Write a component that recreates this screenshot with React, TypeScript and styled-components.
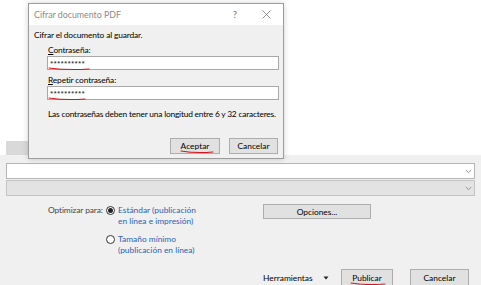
import React from "react";
import styled, { createGlobalStyle } from "styled-components";

const GlobalStyle = createGlobalStyle`
  html, body { margin: 0; padding: 0; background: #f0f0f0; }
  body { font-family: Lato, "Noto Sans", sans-serif; font-size: 8.4px; color: #000; }
  * { box-sizing: border-box; }
`;

const Page = styled.div`
  position: relative;
  width: 481px;
  height: 285px;
  overflow: hidden;
  display: flex;
  flex-direction: column;
`;

const TopArea = styled.div`
  height: 157px;
  background: #ffffff;
  padding: 141px 0 0 6px;
`;

const LeftBlock = styled.div`
  width: 40px;
  height: 14px;
  background: #d9d9d9;
`;

const Main = styled.div`
  flex: 1;
  background: #f0f0f0;
  padding: 8px 6px 0 6px;
  display: flex;
  flex-direction: column;
`;

const Combo = styled.div<{ $disabled?: boolean }>`
  height: 16px;
  margin-bottom: 1px;
  border: 1px solid ${(p) => (p.$disabled ? "#c4c4c4" : "#b5b5b5")};
  background: ${(p) => (p.$disabled ? "#e3e3e3" : "#ffffff")};
  display: flex;
  align-items: center;
  justify-content: flex-end;
  padding-right: 2px;
`;

const Chevron = () => (
  <svg width="7" height="5" viewBox="0 0 7 5">
    <path d="M0.8 1 L3.5 3.6 L6.2 1" fill="none" stroke="#8a8a8a" strokeWidth="0.9" />
  </svg>
);

const OptionsRow = styled.div`
  display: flex;
  align-items: flex-start;
  margin-top: 6px;
  padding-left: 42px;
`;

const OptLabel = styled.div`
  color: #444;
  line-height: 11px;
  padding-top: 2px;
  width: 58px;
  letter-spacing: -0.1px;
`;

const RadioGroup = styled.div`
  display: flex;
  flex-direction: column;
  gap: 5px;
  width: 157px;
`;

const RadioItem = styled.div`
  display: flex;
  align-items: flex-start;
  gap: 3px;
`;

const RadioCircle = styled.span<{ $checked?: boolean }>`
  width: 9px;
  height: 9px;
  margin-top: 3px;
  border-radius: 50%;
  border: 1px solid #333;
  background: #fff;
  display: flex;
  align-items: center;
  justify-content: center;
  flex-shrink: 0;
  &::after {
    content: "";
    width: 5px;
    height: 5px;
    border-radius: 50%;
    background: ${(p) => (p.$checked ? "#222" : "transparent")};
  }
`;

const RadioText = styled.div`
  color: #2a62b8;
  line-height: 11px;
  padding-top: 2px;
`;

const Button = styled.button<{ $w: number }>`
  width: ${(p) => p.$w}px;
  height: 16px;
  padding: 0;
  border: 1px solid #adadad;
  background: #e1e1e1;
  font-family: inherit;
  font-size: 8.4px;
  color: #000;
  display: flex;
  align-items: center;
  justify-content: center;
`;

const OptionsButton = styled(Button)`
  height: 15px;
  margin-top: 1px;
`;

const Footer = styled.div`
  display: flex;
  align-items: center;
  margin-top: 13px;
  padding-left: 257px;
`;

const Tools = styled.div`
  display: flex;
  align-items: center;
  justify-content: space-between;
  padding-right: 12px;
  width: 78px;
`;

const FooterButtons = styled.div`
  display: flex;
  gap: 17px;
`;

const FooterButton = styled(Button)`
  height: 18px;
`;

const Marked = styled.span`
  position: relative;
  display: inline-block;
`;

const Scribble = styled.svg<{ $top: number; $left: number }>`
  position: absolute;
  left: ${(p) => p.$left}px;
  top: ${(p) => p.$top}px;
  overflow: visible;
`;

const RedLine = ({ w, top, left }: { w: number; top: number; left: number }) => (
  <Scribble $top={top} $left={left} width={w} height="4" viewBox={`0 0 ${w} 4`}>
    <path
      d={`M0 1 Q ${w * 0.45} 3.4 ${w} 2`}
      fill="none"
      stroke="#d4141c"
      strokeWidth="1.1"
      strokeLinecap="round"
    />
  </Scribble>
);

/* Dialog */
const Dialog = styled.div`
  position: absolute;
  left: 28px;
  top: 3px;
  width: 256px;
  height: 156px;
  border: 1px solid #9c9c9c;
  background: #f0f0f0;
  box-shadow: 0 0 6px rgba(0, 0, 0, 0.18);
  display: flex;
  flex-direction: column;
  letter-spacing: -0.15px;
`;

const TitleBar = styled.div`
  height: 21px;
  background: #fff;
  display: flex;
  align-items: center;
  padding-left: 5px;
  color: #8a8a8a;
  font-size: 8.8px;
  letter-spacing: 0;
`;

const TitleText = styled.div`
  flex: 1;
`;

const HelpIcon = styled.div`
  width: 14px;
  text-align: center;
  color: #777;
  font-size: 9.6px;
  margin-right: 7px;
`;

const CloseIcon = styled.div`
  width: 34px;
  display: flex;
  justify-content: center;
`;

const DialogBody = styled.div`
  flex: 1;
  padding: 5px 5px 0 5px;
  display: flex;
  flex-direction: column;
`;

const Lead = styled.div`
  line-height: 10px;
`;

const Field = styled.div`
  padding-left: 13px;
  margin-top: 5px;
  display: flex;
  flex-direction: column;
`;

const FieldLabel = styled.div`
  line-height: 10px;
  margin-left: 1px;
  margin-bottom: 1px;
  u { text-decoration-thickness: 1px; text-underline-offset: 1px; }
`;

const Input = styled.div`
  width: 232px;
  height: 14px;
  background: #fff;
  border: 1px solid #a8a8a8;
  padding-left: 2px;
  display: flex;
  align-items: center;
  font-family: "Noto Sans", sans-serif;
  font-size: 6px;
  letter-spacing: 0.2px;
`;

const Info = styled.div`
  padding-left: 14px;
  margin-top: 9px;
  line-height: 10px;
  white-space: nowrap;
  letter-spacing: -0.2px;
`;

const DialogButtons = styled.div`
  margin-top: auto;
  margin-bottom: 4px;
  display: flex;
  justify-content: flex-end;
  gap: 9px;
`;

const DlgButton = styled(Button)`
  height: 16px;
  letter-spacing: 0;
`;

export default function App() {
  return (
    <>
      <GlobalStyle />
      <Page>
        <TopArea>
          <LeftBlock />
        </TopArea>
        <Main>
          <Combo>
            <Chevron />
          </Combo>
          <Combo $disabled>
            <Chevron />
          </Combo>
          <OptionsRow>
            <OptLabel>Optimizar para:</OptLabel>
            <RadioGroup>
              <RadioItem>
                <RadioCircle $checked />
                <RadioText>
                  Estándar (publicación
                  <br />
                  en línea e impresión)
                </RadioText>
              </RadioItem>
              <RadioItem>
                <RadioCircle />
                <RadioText>
                  Tamaño mínimo
                  <br />
                  (publicación en línea)
                </RadioText>
              </RadioItem>
            </RadioGroup>
            <OptionsButton $w={108}>Opciones...</OptionsButton>
          </OptionsRow>
          <Footer>
            <Tools>
              <span>Herramientas</span>
              <svg width="6" height="4" viewBox="0 0 6 4">
                <path d="M0.5 0.5 L5.5 0.5 L3 3.5 Z" fill="#222" />
              </svg>
            </Tools>
            <FooterButtons>
              <FooterButton $w={52}>
                <Marked>
                  Publicar
                  <RedLine w={34} top={9} left={-1} />
                </Marked>
              </FooterButton>
              <FooterButton $w={59}>Cancelar</FooterButton>
            </FooterButtons>
          </Footer>
        </Main>

        <Dialog>
          <TitleBar>
            <TitleText>Cifrar documento PDF</TitleText>
            <HelpIcon>?</HelpIcon>
            <CloseIcon>
              <svg width="9" height="9" viewBox="0 0 9 9">
                <path d="M0.5 0.5 L8.5 8.5 M8.5 0.5 L0.5 8.5" stroke="#777" strokeWidth="0.8" />
              </svg>
            </CloseIcon>
          </TitleBar>
          <DialogBody>
            <Lead>Cifrar el documento al guardar.</Lead>
            <Field>
              <FieldLabel>
                <u>C</u>ontraseña:
              </FieldLabel>
              <Input>
                <Marked>
                  **********
                  <RedLine w={40} top={8} left={-1} />
                </Marked>
              </Input>
            </Field>
            <Field>
              <FieldLabel>
                <u>R</u>epetir contraseña:
              </FieldLabel>
              <Input>
                <Marked>
                  **********
                  <RedLine w={36} top={8} left={-1} />
                </Marked>
              </Input>
            </Field>
            <Info>Las contraseñas deben tener una longitud entre 6 y 32 caracteres.</Info>
            <DialogButtons>
              <DlgButton $w={50}>
                <Marked>
                  Aceptar
                  <RedLine w={32} top={9} left={0} />
                </Marked>
              </DlgButton>
              <DlgButton $w={49}>Cancelar</DlgButton>
            </DialogButtons>
          </DialogBody>
        </Dialog>
      </Page>
    </>
  );
}
